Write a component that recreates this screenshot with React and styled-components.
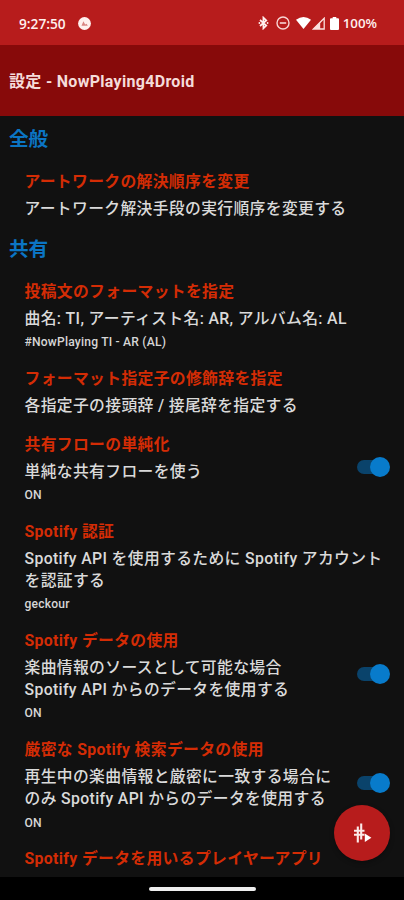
import React from 'react';
import styled, { createGlobalStyle } from 'styled-components';

const GlobalStyle = createGlobalStyle`
	* {
		box-sizing: border-box;
	}

	body {
		margin: 0;
		background: #000;
		font-family: Roboto, 'Noto Sans CJK JP', sans-serif;
	}
`;

const Screen = styled.div`
	position: relative;
	display: flex;
	flex-direction: column;
	width: 404px;
	height: 900px;
	overflow: hidden;
	background: #111;
`;

const StatusBar = styled.div`
	flex: none;
	display: flex;
	align-items: center;
	height: 45px;
	padding: 1px 27px 0 19px;
	color: #fff0ee;
	background: #b71c1c;
	font-family: 'Open Sans', Roboto, sans-serif;
	font-size: 13.3px;
	font-weight: 600;
`;

const Clock = styled.span`
	width: 59px;
	font-size: 13.7px;
`;

const StatusIcons = styled.div`
	display: flex;
	align-items: center;
	margin-left: auto;
`;

const StatusIcon = styled.svg`
	display: block;
	margin-right: ${props => props.$gap || 0}px;
`;

const AppBar = styled.header`
	flex: none;
	display: flex;
	align-items: center;
	height: 71px;
	padding: 0 9px 1px;
	color: #f5dcda;
	background: #870a0a;
	font-size: 16px;
	font-weight: 700;
	letter-spacing: 0.3px;
`;

const Content = styled.main`
	flex: 1;
	min-height: 0;
	overflow: hidden;
	padding-top: 2px;
`;

const Category = styled.h2`
	margin: 0;
	padding: 8px 9px;
	color: #0b75c4;
	font-size: 19.6px;
	font-weight: 700;
	line-height: 28px;
`;

const Preference = styled.div`
	display: flex;
	align-items: center;
	padding: 8.5px 14px 8.5px 24.5px;
`;

const PreferenceText = styled.div`
	flex: 1;
	white-space: nowrap;
`;

const Title = styled.div`
	color: #d42c05;
	font-size: 15.8px;
	font-weight: 700;
	letter-spacing: 0.35px;
	line-height: 22px;
`;

const Description = styled.div`
	margin-top: 5px;
	color: #dadada;
	font-size: 15.8px;
	font-weight: 500;
	letter-spacing: 0.35px;
	line-height: 22.4px;
	white-space: pre-line;
`;

const Value = styled.div`
	margin-top: 3.8px;
	color: #d6d6d6;
	font-size: 12.1px;
	font-weight: 500;
	letter-spacing: 0.2px;
	line-height: 16.5px;
`;

const Switch = styled.span`
	flex: none;
	display: flex;
	align-items: center;
	justify-content: flex-end;
	width: 32px;
	height: 14px;
	margin: 0 1px 3.5px 0;
	border-radius: 7px;
	background: #0a436b;
`;

const Thumb = styled.span`
	flex: none;
	width: 20px;
	height: 20px;
	margin-right: -1px;
	border-radius: 50%;
	background: #087bcb;
`;

const NavigationBar = styled.div`
	flex: none;
	display: flex;
	justify-content: center;
	height: 23px;
	padding-top: 10px;
	background: #000;
`;

const HomeHandle = styled.span`
	width: 107px;
	height: 4px;
	border-radius: 2px;
	background: #eee;
`;

const Fab = styled.button`
	position: absolute;
	right: 14.5px;
	bottom: 39px;
	display: flex;
	align-items: center;
	justify-content: center;
	width: 56px;
	height: 56px;
	padding: 0;
	border: 0;
	border-radius: 50%;
	background: #b71c1c;
	box-shadow: 0 2px 5px rgba(0, 0, 0, 0.3);
`;

const categories = [
	{
		name: '全般',
		items: [
			{ title: 'アートワークの解決順序を変更', text: 'アートワーク解決手段の実行順序を変更する' },
		],
	},
	{
		name: '共有',
		items: [
			{
				title: '投稿文のフォーマットを指定',
				text: '曲名: TI, アーティスト名: AR, アルバム名: AL',
				value: '#NowPlaying TI - AR (AL)',
			},
			{ title: 'フォーマット指定子の修飾辞を指定', text: '各指定子の接頭辞 / 接尾辞を指定する' },
			{ title: '共有フローの単純化', text: '単純な共有フローを使う', value: 'ON', toggle: true },
			{
				title: 'Spotify 認証',
				text: 'Spotify API を使用するために Spotify アカウント\nを認証する',
				value: 'geckour',
			},
			{
				title: 'Spotify データの使用',
				text: '楽曲情報のソースとして可能な場合\nSpotify API からのデータを使用する',
				value: 'ON',
				toggle: true,
			},
			{
				title: '厳密な Spotify 検索データの使用',
				text: '再生中の楽曲情報と厳密に一致する場合に\nのみ Spotify API からのデータを使用する',
				value: 'ON',
				toggle: true,
			},
			{ title: 'Spotify データを用いるプレイヤーアプリ' },
		],
	},
];

function PreferenceItem({ item }) {
	return (
		<Preference>
			<PreferenceText>
				<Title>{item.title}</Title>
				{item.text && <Description>{item.text}</Description>}
				{item.value && <Value>{item.value}</Value>}
			</PreferenceText>
			{item.toggle && <Switch role="switch" aria-checked="true"><Thumb /></Switch>}
		</Preference>
	)
}

function Status() {
	return (
		<StatusBar>
			<Clock>9:27:50</Clock>
			<StatusIcon width="13" height="13" viewBox="0 0 13 13">
				<circle cx="6.5" cy="6.5" r="6.4" fill="#fff0ee" />
				<path d="M3.5 8.8 5.4 4.2 7.2 7.6 8.6 6.8 9.8 8.8Z" fill="#d98582" />
			</StatusIcon>
			<StatusIcons>
				<StatusIcon $gap={7} width="11" height="14" viewBox="0 0 11 14">
					<path d="M2 4 8.3 9.6 5.4 12.4V1.6L8.3 4.4 2 10" fill="none" stroke="#fff0ee" strokeWidth="1.7" />
					<circle cx="1.4" cy="7" r="0.9" fill="#fff0ee" />
					<circle cx="9.6" cy="7" r="0.9" fill="#fff0ee" />
				</StatusIcon>
				<StatusIcon $gap={6} width="14" height="14" viewBox="0 0 14 14">
					<circle cx="7" cy="7" r="6" fill="none" stroke="#f8d5d3" strokeWidth="1.4" />
					<path d="M3.8 7h6.4" stroke="#f8d5d3" strokeWidth="1.6" />
				</StatusIcon>
				<StatusIcon $gap={1} width="15" height="12" viewBox="0 0 15 12">
					<path d="M0 2.8Q7.5-2.6 15 2.8L7.5 12Z" fill="#fff" />
				</StatusIcon>
				<StatusIcon $gap={5} width="13" height="13" viewBox="0 0 13 13">
					<path d="M12.2 1.2V12H1.4Z" fill="none" stroke="#fbe0de" strokeWidth="1.3" />
					<path d="M8.2 5V12H1.2Z" fill="#fbe0de" />
				</StatusIcon>
				<StatusIcon $gap={4} width="9" height="13" viewBox="0 0 9 13">
					<path d="M2.7 0h3.6v1.3H8q1 0 1 1V12q0 1-1 1H1q-1 0-1-1V2.3q0-1 1-1h1.7Z" fill="#fff" />
				</StatusIcon>
				<span>100%</span>
			</StatusIcons>
		</StatusBar>
	)
}

function App() {
	return (
		<Screen>
			<GlobalStyle />
			<Status />
			<AppBar>設定 - NowPlaying4Droid</AppBar>
			<Content>
				{categories.map(category => (
					<section key={category.name}>
						<Category>{category.name}</Category>
						{category.items.map(item => <PreferenceItem key={item.title} item={item} />)}
					</section>
				))}
			</Content>
			<NavigationBar><HomeHandle /></NavigationBar>
			<Fab aria-label="NowPlaying">
				<svg width="22" height="22" viewBox="0 0 22 22">
					<path d="M6.8 4.5V20.5M10.2 1.5V17.5M3 8.7H13.5M3 12.8H13.5" fill="none" stroke="#fbe9e8" strokeWidth="2.1" />
					<path d="M13.8 11.6 20.4 15.8 13.8 20Z" fill="#fff" />
				</svg>
			</Fab>
		</Screen>
	)
}

export default App;
